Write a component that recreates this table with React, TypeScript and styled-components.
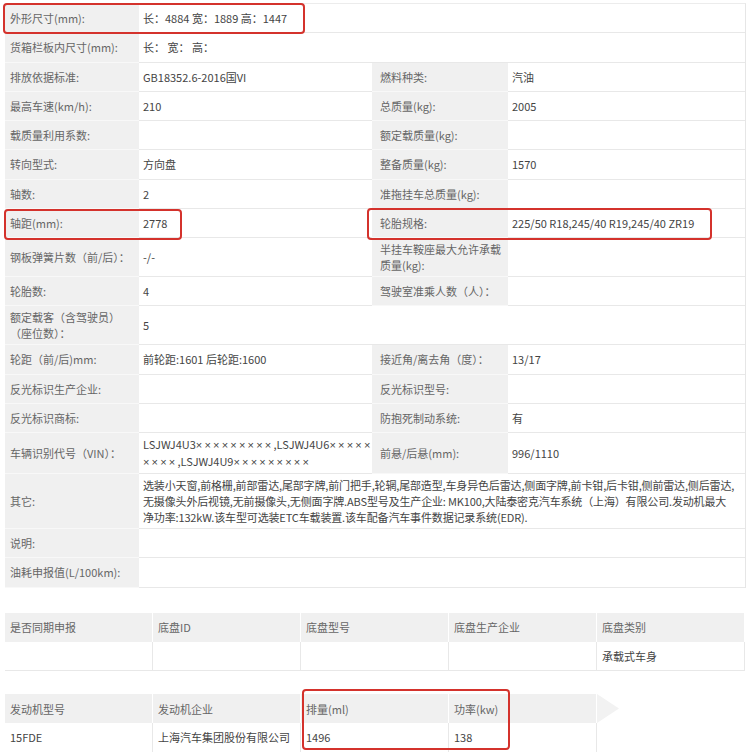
import { Fragment, ReactNode } from 'react';
import { createGlobalStyle, styled } from 'styled-components';

type SpecRowData = {
	label: ReactNode;
	value?: ReactNode;
	right?: [ReactNode, ReactNode];
};

const Cross = styled.span`
	font-family: 'Liberation Sans', Arial, sans-serif;
	letter-spacing: 2.2px;
`;

const Tight = styled.span`
	letter-spacing: -0.15px;
`;

const x = (n: number) => <Cross>{'×'.repeat(n)}</Cross>;

const specRows: SpecRowData[] = [
	{ label: '外形尺寸(mm):', value: '长：4884 宽：1889 高：1447' },
	{ label: '货箱栏板内尺寸(mm):', value: '长： 宽： 高：' },
	{ label: '排放依据标准:', value: 'GB18352.6-2016国VI', right: ['燃料种类:', '汽油'] },
	{ label: '最高车速(km/h):', value: '210', right: ['总质量(kg):', '2005'] },
	{ label: '载质量利用系数:', value: '', right: ['额定载质量(kg):', ''] },
	{ label: '转向型式:', value: '方向盘', right: ['整备质量(kg):', '1570'] },
	{ label: '轴数:', value: '2', right: ['准拖挂车总质量(kg):', ''] },
	{ label: '轴距(mm):', value: '2778', right: ['轮胎规格:', '225/50 R18,245/40 R19,245/40 ZR19'] },
	{
		label: '钢板弹簧片数（前/后）：',
		value: '-/-',
		right: [
			<>
				半挂车鞍座最大允许承载
				<br />
				质量(kg):
			</>,
			'',
		],
	},
	{ label: '轮胎数:', value: '4', right: ['驾驶室准乘人数（人）：', ''] },
	{
		label: (
			<>
				额定载客（含驾驶员）
				<br />
				（座位数）：
			</>
		),
		value: '5',
	},
	{ label: '轮距（前/后)mm:', value: '前轮距:1601 后轮距:1600', right: ['接近角/离去角（度）：', '13/17'] },
	{ label: '反光标识生产企业:', value: '', right: ['反光标识型号:', ''] },
	{ label: '反光标识商标:', value: '', right: ['防抱死制动系统:', '有'] },
	{
		label: '车辆识别代号（VIN）：',
		value: (
			<span>
				LSJWJ4U3{x(9)},LSJWJ4U6{x(5)}
				<br />
				{x(4)},LSJWJ4U9{x(9)}
			</span>
		),
		right: ['前悬/后悬(mm):', '996/1110'],
	},
	{
		label: '其它:',
		value: (
			<Tight>
				选装小天窗,前格栅,前部雷达,尾部字牌,前门把手,轮辋,尾部造型,车身异色后雷达,侧面字牌,前卡钳,后卡钳,侧前雷达,侧后雷达,
				<br />
				无摄像头外后视镜,无前摄像头,无侧面字牌.ABS型号及生产企业: MK100,大陆泰密克汽车系统（上海）有限公司.发动机最大
				<br />
				净功率:132kW.该车型可选装ETC车载装置.该车配备汽车事件数据记录系统(EDR).
			</Tight>
		),
	},
	{ label: '说明:', value: '' },
	{ label: '油耗申报值(L/100km):', value: '' },
];

const chassisHead = ['是否同期申报', '底盘ID', '底盘型号', '底盘生产企业', '底盘类别'];
const chassisBody = ['', '', '', '', '承载式车身'];
const engineHead = ['发动机型号', '发动机企业', '排量(ml)', '功率(kw)'];
const engineBody = ['15FDE', '上海汽车集团股份有限公司', '1496', '138'];

// red annotation frames drawn over the screenshot
const marks = [
	{ x: 3, y: 3, w: 302, h: 31 },
	{ x: 4, y: 209, w: 178, h: 31 },
	{ x: 367, y: 208, w: 345, h: 32 },
	{ x: 302, y: 689, w: 208, h: 61 },
];

const App = () => {
	return (
		<>
			<GlobalStyle />
			<Page>
				<SpecTable>
					{specRows.map((row, i) => (
						<SpecRow key={i}>
							<Label>{row.label}</Label>
							<Value $span={row.right ? 1 : 3}>{row.value}</Value>
							{row.right && (
								<>
									<Label $side>{row.right[0]}</Label>
									<Value>{row.right[1]}</Value>
								</>
							)}
						</SpecRow>
					))}
				</SpecTable>

				<GridTable $cols={5}>
					{chassisHead.map((h) => (
						<HeadCell key={h}>{h}</HeadCell>
					))}
					{chassisBody.map((v, i) => (
						<BodyCell key={i}>{v}</BodyCell>
					))}
				</GridTable>

				<EngineTable>
					{engineHead.map((h) => (
						<HeadCell key={h}>{h}</HeadCell>
					))}
					<Arrow />
					{engineBody.map((v, i) => (
						<Fragment key={i}>
							<BodyCell>{v}</BodyCell>
						</Fragment>
					))}
					<span />
				</EngineTable>

				{marks.map((m, i) => (
					<Mark key={i} $x={m.x} $y={m.y} $w={m.w} $h={m.h} />
				))}
			</Page>
		</>
	);
};

const GlobalStyle = createGlobalStyle`
	body {
		margin: 0;
		background: #fff;
		font-family: "Noto Sans CJK SC", "Noto Sans", sans-serif;
		font-size: 11px;
		color: #444;
	}
`;

const Page = styled.div`
	position: relative;
	width: 750px;
	height: 752px;
	overflow: hidden;
	box-sizing: border-box;
	padding: 3px 5px 0;
`;

const SpecTable = styled.div`
	width: 740px;
	border-top: 1px solid #ececec;
	border-right: 1px solid #e6e6e6;
`;

const SpecRow = styled.div`
	display: grid;
	grid-template-columns: 134px 233px 136px 1fr;
`;

const Cell = styled.div`
	display: flex;
	align-items: center;
	box-sizing: border-box;
	min-height: 29.25px;
	padding: 3px 2px 3px 5px;
	line-height: 16px;
	white-space: nowrap;
`;

const Label = styled(Cell)<{ $side?: boolean }>`
	background: #f0f0f0;
	color: #666;
	border-bottom: 1px solid #f8f8f8;
	padding-left: ${(p) => (p.$side ? '8px' : '5px')};
`;

const Value = styled(Cell)<{ $span?: number }>`
	grid-column: span ${(p) => p.$span ?? 1};
	padding-left: 4px;
	color: #444;
	border-bottom: 1px solid #e8e8e8;
`;

const GridTable = styled.div<{ $cols: number }>`
	display: grid;
	grid-template-columns: repeat(${(p) => p.$cols}, 148px);
	margin-top: 25px;
	width: 740px;
	border-right: 1px solid #e6e6e6;
	box-sizing: border-box;
`;

const EngineTable = styled.div`
	display: grid;
	grid-template-columns: repeat(4, 148px) 22px;
	margin-top: 23px;
`;

const HeadCell = styled(Cell)`
	height: 29px;
	background: #f0f0f0;
	color: #666;
	border-right: 1px solid #fff;
	&:last-of-type {
		border-right: none;
	}
`;

const BodyCell = styled(Cell)`
	height: 29px;
	color: #444;
	border-right: 1px solid #e8e8e8;
	border-bottom: 1px solid #e8e8e8;
`;

const Arrow = styled.div`
	height: 29px;
	background: #f2f2f2;
	clip-path: polygon(0 0, 100% 50%, 0 100%);
`;

const Mark = styled.div<{ $x: number; $y: number; $w: number; $h: number }>`
	position: absolute;
	left: ${(p) => p.$x}px;
	top: ${(p) => p.$y}px;
	width: ${(p) => p.$w}px;
	height: ${(p) => p.$h}px;
	box-sizing: border-box;
	border: 2px solid #d4322c;
	border-radius: 4px;
	pointer-events: none;
`;

export default App;
